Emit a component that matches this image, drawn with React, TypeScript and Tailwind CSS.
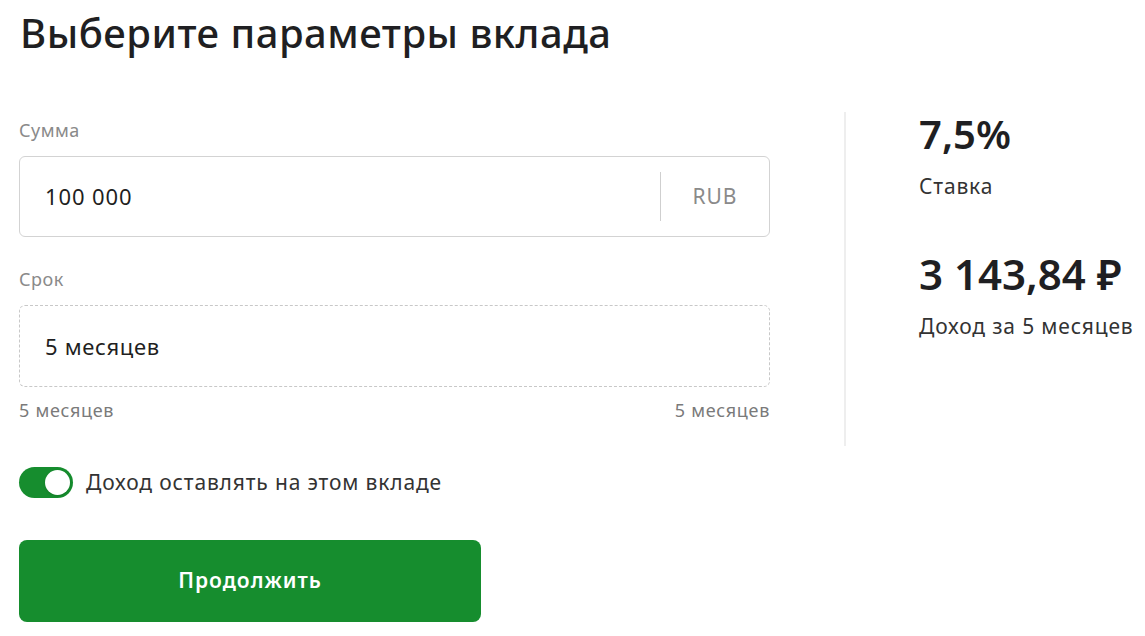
export default function App() {
  return (
    <main
      className="min-h-screen bg-white pl-[20px] pt-[8px] text-[#1f1f22]"
      style={{ fontFamily: '"Noto Sans", "Open Sans", sans-serif' }}
    >
      {/* Title */}
      <h1 className="text-[40px] font-medium leading-[50px] tracking-[0.5px]">
        Выберите параметры вклада
      </h1>

      <div className="mt-[61px] flex">
        {/* Form */}
        <div className="w-[751px] -ml-px">
          <p className="text-[18px] leading-[22px] tracking-[0.5px] text-[#8a8a8a]">Сумма</p>
          <div className="mt-[15px] flex h-[81px] items-center rounded-[6px] border border-[#d3d3d3] pl-[25px]">
            <span className="flex-1 text-[22px] tracking-[0.9px] text-[#1f1f22]">100 000</span>
            <div className="h-[49px] w-px bg-[#cfcfcf]" />
            <span className="w-[108px] text-center text-[21px] tracking-[1px] text-[#8a8a8a]">RUB</span>
          </div>

          <p className="mt-[31px] text-[18px] leading-[22px] tracking-[0.5px] text-[#8a8a8a]">Срок</p>
          <div className="mt-[15px] flex h-[82px] items-center rounded-[6px] border border-dashed border-[#c8c8c8] pl-[25px]">
            <span className="text-[22px] tracking-[0.7px] text-[#1f1f22]">5 месяцев</span>
          </div>
          <div className="mt-[12px] flex justify-between text-[18px] leading-[22px] tracking-[0.7px] text-[#7a7a7a]">
            <span>5 месяцев</span>
            <span>5 месяцев</span>
          </div>

          {/* Toggle */}
          <label className="mt-[46px] flex items-center gap-[13px]">
            <span className="relative inline-flex h-[31px] w-[54px] items-center rounded-full bg-[#168d2e]">
              <span className="absolute right-[3px] h-[25px] w-[25px] rounded-full bg-white shadow" />
            </span>
            <span className="text-[21px] tracking-[0.85px] text-[#333333]">Доход оставлять на этом вкладе</span>
          </label>

          <button className="mt-[41px] flex h-[82px] w-[462px] items-center justify-center rounded-[8px] bg-[#168d2e] text-[21px] font-semibold tracking-[1px] text-white">
            Продолжить
          </button>
        </div>

        {/* Divider */}
        <div className="ml-[74px] mt-[-7px] h-[334px] w-[2px] bg-[#eeeeee]" />

        {/* Summary */}
        <div className="ml-[73px] mt-[-10px]">
          <p className="text-[40px] font-semibold leading-[50px]">7,5%</p>
          <p className="mt-[14px] text-[21px] leading-[26px] tracking-[0.85px] text-[#333333]">Ставка</p>
          <p className="mt-[49px] text-[42px] font-semibold leading-[52px]">3 143,84 ₽</p>
          <p className="mt-[13px] text-[21px] leading-[26px] tracking-[0.85px] text-[#333333]">Доход за 5 месяцев</p>
        </div>
      </div>
    </main>
  );
}
